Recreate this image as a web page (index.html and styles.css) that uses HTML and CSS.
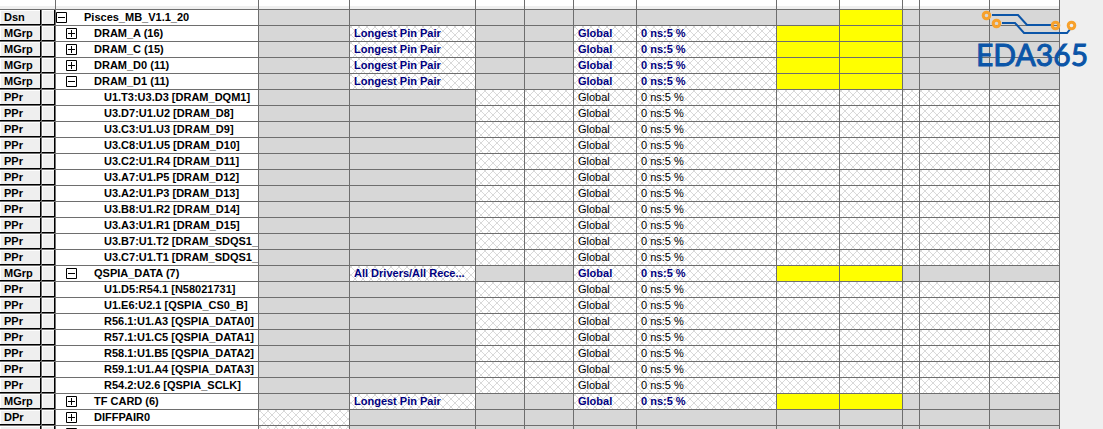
FILE: index.html
```
<!DOCTYPE html>
<html lang="en">

<head>
    <meta charset="UTF-8">
    <title>Pisces_MB_V1.1_20</title>
    <link rel="stylesheet" href="styles.css">
</head>

<body>
<table class="sheet">
    <colgroup>
        <col class="w-type">
        <col class="w-flag">
        <col class="w-name">
        <col class="w-ref">
        <col class="w-pair">
        <col class="w-delay">
        <col class="w-delay">
        <col class="w-scope">
        <col class="w-tol">
        <col class="w-result">
        <col class="w-result">
        <col class="w-gap">
        <col>
        <col>
    </colgroup>
    <tbody id="rows"></tbody>
</table>

<div class="logo">
    <svg width="98" height="28" viewBox="0 0 98 28" fill="none" aria-hidden="true">
        <g stroke="#0b55a8" stroke-width="2">
            <path d="M11 5H37L46 15H70"/>
            <path d="M21 13H34L43 23H86L90 18"/>
        </g>
        <g stroke="#f7a12c" stroke-width="3">
            <circle cx="5.500" cy="5.500" r="3.300"/>
            <circle cx="15.500" cy="13.500" r="3.300"/>
            <circle cx="74.500" cy="15.500" r="3.300"/>
            <circle cx="90.500" cy="15.500" r="3.300"/>
        </g>
    </svg>
    <span class="logo-text">EDA365</span>
</div>

<script src="sheet.js"></script>
</body>

</html>
```

FILE: styles.css
```
body {
    margin: 0;
    height: 100vh;
    overflow: hidden;
    box-sizing: border-box;
    padding-right: 43px;
    background-color: #efefef;
    font-family: "Liberation Sans", Arial, sans-serif;
    font-size: 11px;
    color: #000;
}

/* constraint sheet */
.sheet {
    width: 100%;
    table-layout: fixed;
    border-collapse: separate;
    border-spacing: 0;
}

.w-type {
    width: 42px;
}

.w-flag {
    width: 14px;
}

.w-name {
    width: 203px;
}

.w-ref {
    width: 91px;
}

.w-pair {
    width: 126px;
}

.w-delay {
    width: 49px;
}

.w-scope,
.w-result {
    width: 63px;
}

.w-tol {
    width: 140px;
}

.w-gap {
    width: 17px;
}

.sheet th,
.sheet td {
    box-sizing: border-box;
    height: 16px;
    padding: 0 0 0 4px;
    border-right: 1px solid #6e6e6e;
    border-bottom: 1px solid #6e6e6e;
    line-height: 15px;
    text-align: left;
    white-space: nowrap;
    overflow: hidden;
}

.sheet .top td {
    height: 10px;
    padding: 0;
    background: linear-gradient(#fff 6px, #efefef 6px);
}

/* raised row header cells */
.sheet .head {
    background-color: #efefef;
    box-shadow: inset -1px -1px #000, inset 1px 1px #fff;
}

.sheet .name {
    padding-left: 0;
    background-color: #fff;
}

.name-box {
    display: flex;
    align-items: center;
    height: 15px;
}

.level-1 {
    padding-left: 10px;
}

.level-2 {
    padding-left: 48px;
}

.toggle {
    flex: none;
    width: 11px;
    height: 11px;
    margin: 0 17px 0 0;
    padding: 0;
    border: 0;
    background: none;
}

.toggle svg {
    display: block;
}

.sheet .gray {
    background-color: #d7d7d7;
}

.sheet .yellow {
    background-color: #ff0;
}

.sheet .hatch {
    background: #fff url("data:image/svg+xml,%3Csvg xmlns='http://www.w3.org/2000/svg' width='8' height='8' shape-rendering='crispEdges'%3E%3Cpath fill='%23d9d9d9' d='M0 0h2v2H0zM2 2h1v1H2zM3 3h1v1H3zM4 4h2v2H4zM6 6h1v1H6zM7 7h1v1H7zM7 2h1v1H7zM6 3h1v1H6zM3 6h1v1H3zM2 7h1v1H2z'/%3E%3C/svg%3E");
}

.group td {
    color: #000080;
    font-weight: bold;
}

/* logo over the sheet */
.logo {
    position: absolute;
    top: 10px;
    right: 16px;
    width: 111px;
    color: #0b55a8;
}

.logo svg {
    display: block;
    margin-left: 5px;
}

.logo-text {
    display: block;
    font-family: Lato, sans-serif;
    font-size: 30px;
    line-height: 32px;
    -webkit-text-stroke: 1px #0b55a8;
}
```

FILE: sheet.js
```
const PIN = 'Longest Pin Pair';

// [type, name, toggle sign, pin pair]
const rows = [
    ['Dsn', 'Pisces_MB_V1.1_20', '-'],
    ['MGrp', 'DRAM_A (16)', '+', PIN],
    ['MGrp', 'DRAM_C (15)', '+', PIN],
    ['MGrp', 'DRAM_D0 (11)', '+', PIN],
    ['MGrp', 'DRAM_D1 (11)', '-', PIN],
    ['PPr', 'U1.T3:U3.D3 [DRAM_DQM1]'],
    ['PPr', 'U3.D7:U1.U2 [DRAM_D8]'],
    ['PPr', 'U3.C3:U1.U3 [DRAM_D9]'],
    ['PPr', 'U3.C8:U1.U5 [DRAM_D10]'],
    ['PPr', 'U3.C2:U1.R4 [DRAM_D11]'],
    ['PPr', 'U3.A7:U1.P5 [DRAM_D12]'],
    ['PPr', 'U3.A2:U1.P3 [DRAM_D13]'],
    ['PPr', 'U3.B8:U1.R2 [DRAM_D14]'],
    ['PPr', 'U3.A3:U1.R1 [DRAM_D15]'],
    ['PPr', 'U3.B7:U1.T2 [DRAM_SDQS1_'],
    ['PPr', 'U3.C7:U1.T1 [DRAM_SDQS1_'],
    ['MGrp', 'QSPIA_DATA (7)', '-', 'All Drivers/All Rece...'],
    ['PPr', 'U1.D5:R54.1 [N58021731]'],
    ['PPr', 'U1.E6:U2.1 [QSPIA_CS0_B]'],
    ['PPr', 'R56.1:U1.A3 [QSPIA_DATA0]'],
    ['PPr', 'R57.1:U1.C5 [QSPIA_DATA1]'],
    ['PPr', 'R58.1:U1.B5 [QSPIA_DATA2]'],
    ['PPr', 'R59.1:U1.A4 [QSPIA_DATA3]'],
    ['PPr', 'R54.2:U2.6 [QSPIA_SCLK]'],
    ['MGrp', 'TF CARD (6)', '+', PIN],
    ['DPr', 'DIFFPAIR0', '+'],
    ['', '', '+']
];

// cell fill per row type: g = gray, h = hatch, y = yellow
const fills = {
    Dsn: 'gggggggyggg',
    MGrp: 'ghgghhyyggg',
    PPr: 'gghhhhhhhhh',
    DPr: 'hgggggggggg'
};
const fillClass = {g: 'gray', h: 'hatch', y: 'yellow'};

function toggle(sign, name) {
    const label = sign === '+' ? 'Expand' : 'Collapse';
    const bar = sign === '+' ? 'M5.5 2v7' : '';
    return `<button class="toggle" type="button" aria-label="${label} ${name}">
        <svg width="11" height="11" fill="none" stroke="#000"><path d="M.5 .5h10v10h-10zM2 5.5h7${bar}"/></svg>
    </button>`;
}

function renderRow([type, name, sign, pair]) {
    const level = type === 'Dsn' ? 0 : type === 'PPr' ? 2 : 1;
    const timed = type === 'MGrp' || type === 'PPr';
    const texts = {1: pair || '', 4: timed ? 'Global' : '', 5: timed ? '0 ns:5 %' : ''};
    const cells = [...(fills[type] || fills.DPr)]
        .map((f, i) => `<td class="${fillClass[f]}">${texts[i] || ''}</td>`)
        .join('');

    return `<tr class="${type === 'MGrp' ? 'group' : ''}">
        <th class="head">${type}</th>
        <th class="head"></th>
        <th class="name"><div class="name-box level-${level}">${sign ? toggle(sign, name) : ''}${name}</div></th>
        ${cells}
    </tr>`;
}

// strip above the first row
const strip = `<tr class="top"><td colspan="2"></td>${'<td></td>'.repeat(12)}</tr>`;

document.getElementById('rows').innerHTML = strip + rows.map(renderRow).join('');
```
